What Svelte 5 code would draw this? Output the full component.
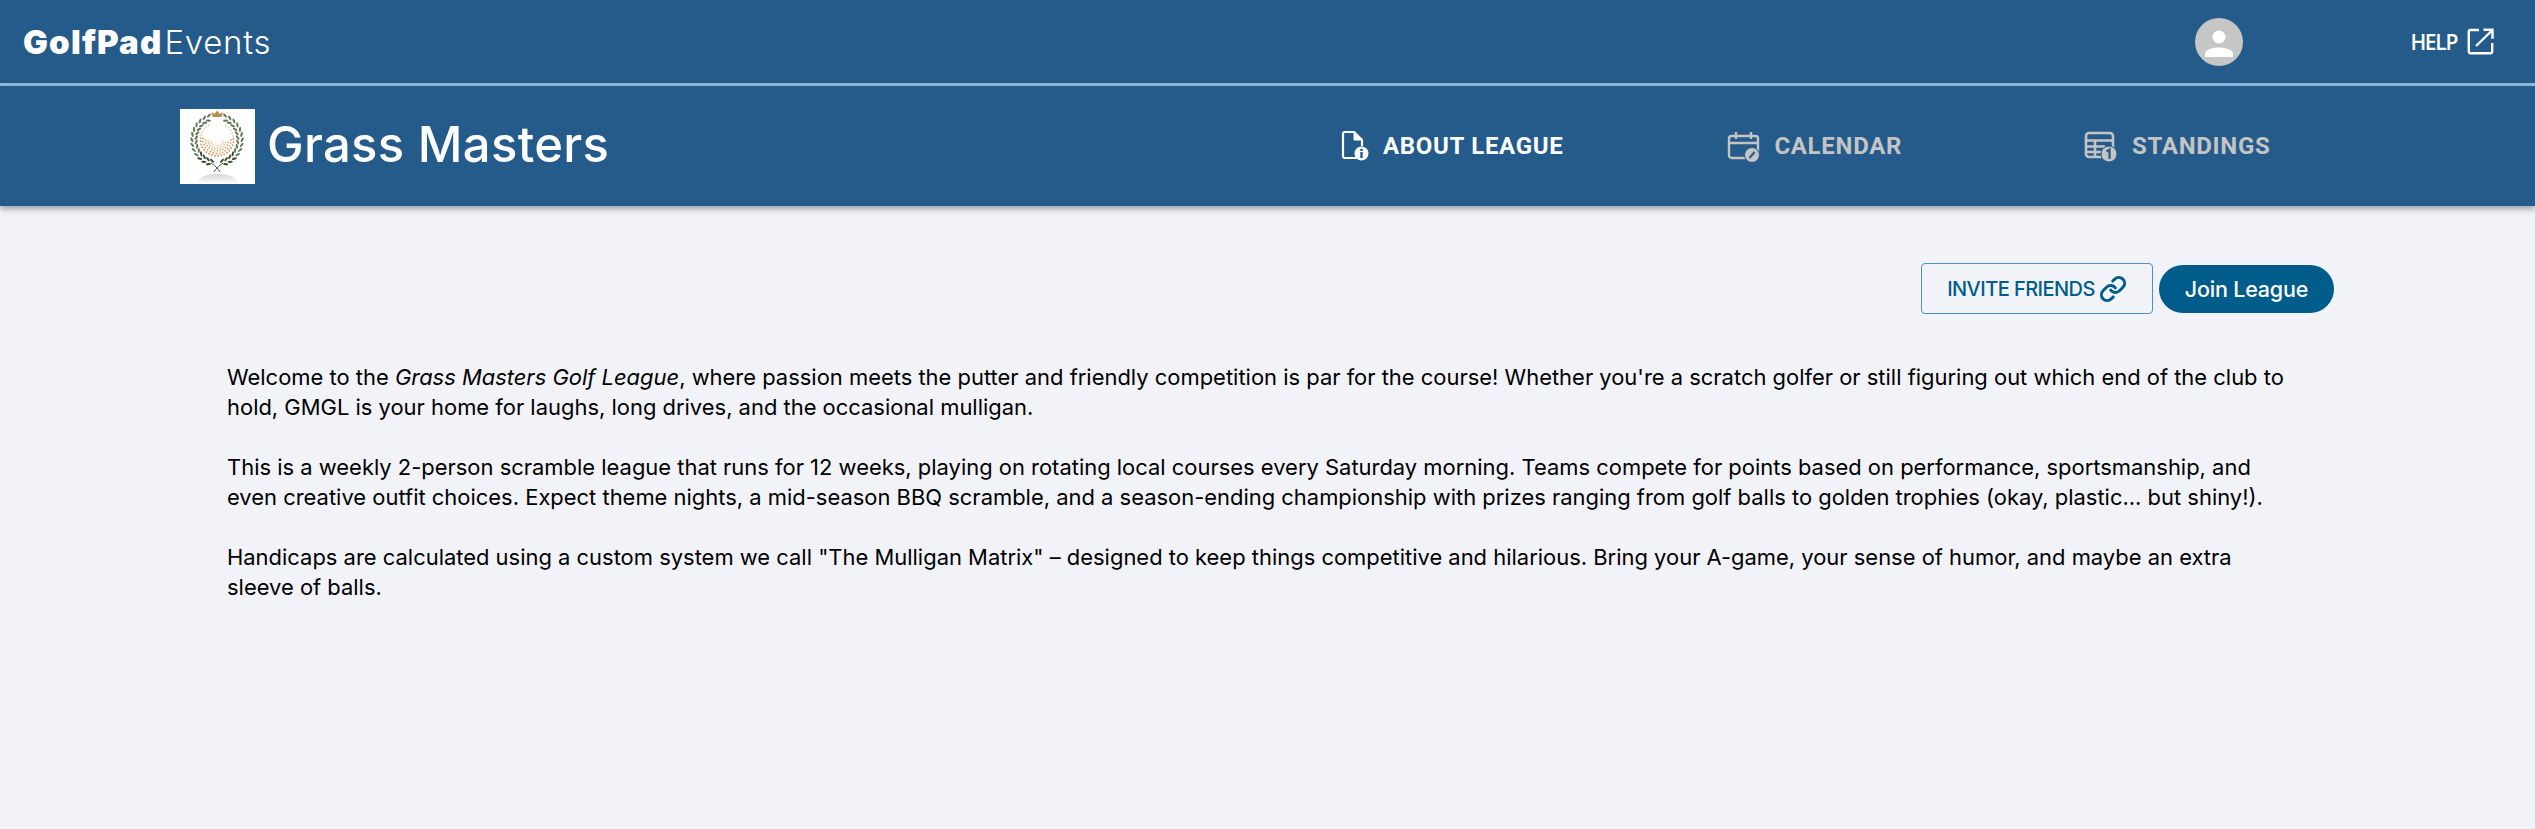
<script>
  const leaves = [];
  for (const side of [-1, 1]) {
    for (let i = 0; i < 26; i++) {
      const deg = 14 + i * 5.9;
      const a = deg * Math.PI / 180;
      const off = i % 2 ? 2.2 : -2.2;
      const x = 37 + side * (23 + off) * Math.sin(a);
      const y = 31 + (23.500 + off) * Math.cos(a);
      const rot = side * (90 - deg + (i % 2 ? 28 : -28));
      leaves.push({ x: x.toFixed(1), y: y.toFixed(1), rot: rot.toFixed(0), f: i < 7 ? '#3f5136' : '#63785a' });
    }
  }
  const dots = [];
  for (let r = 0; r < 5; r++) {
    const rad = 16.500 - r * 2.500;
    const start = r === 0 ? 150 : 100 - r * 6;
    for (let deg = -start; deg <= start; deg += 11 + r * 2) {
      const a = deg * Math.PI / 180;
      const high = Math.abs(deg) > 100;
      dots.push({ x: (37 + rad * Math.sin(a)).toFixed(1), y: (30.500 + rad * Math.cos(a)).toFixed(1), o: high ? 0.45 : (0.95 - r * 0.15).toFixed(2) });
    }
  }
</script>

<div class="page">
  <header class="top">
    <div class="brand"><b>GolfPad</b><span>Events</span></div>
    <div class="top-right">
      <div class="avatar">
        <svg viewBox="0 0 48 48" width="48" height="48"><circle cx="24" cy="19" r="6.500" fill="#fff"/><path d="M10 39v-3c0-4 7-6.500 14-6.500S38 32 38 36v3z" fill="#fff"/></svg>
      </div>
      <div class="help">
        <span>HELP</span>
        <svg viewBox="0 0 27 27" width="27" height="27" fill="none" stroke="#fff" stroke-width="2.400"><path d="M12 2H3a1.500 1.500 0 0 0-1.200 1.200v20.600A1.500 1.500 0 0 0 3 25.200h21a1.500 1.500 0 0 0 1.200-1.400V15"/><path d="M9 18 25 2.500M16.500 1.800h9v9"/></svg>
      </div>
    </div>
  </header>

  <section class="league">
    <div class="identity">
      <svg class="logo" viewBox="0 0 75 75" width="75" height="75">
        <defs>
          <linearGradient id="refl" x1="0" y1="0" x2="0" y2="1"><stop offset="0" stop-color="#d6d6d6"/><stop offset="1" stop-color="#fff"/></linearGradient>
        </defs>
        <rect width="75" height="75" fill="#fff"/>
        <path d="M32.500 8 31.500 3l3 2 2.600-3.500L39.700 5l3-2-1 5z" fill="#bd8a4e"/>
        {#each leaves as l}
          <ellipse cx={l.x} cy={l.y} rx="1.100" ry="2.600" fill={l.f} transform="rotate({l.rot} {l.x} {l.y})"/>
        {/each}
        <path d="M31 54c3 2 7 5 9 9M43 54c-3 2-7 5-9 9" fill="none" stroke="#4f5a48" stroke-width="1"/>
        {#each dots as d}
          <circle cx={d.x} cy={d.y} r="0.900" fill="#c8873f" opacity={d.o}/>
        {/each}
        <path d="M16 75c4-9 13-10 21-10s18 1 22 10z" fill="url(#refl)"/>
      </svg>
      <h1>Grass Masters</h1>
    </div>
    <nav>
      <div class="tab active">
        <svg viewBox="0 0 28 30" width="28" height="30" fill="none" stroke="currentColor" stroke-width="2.200">
          <path d="M16 27H4a2 2 0 0 1-2-2V3a2 2 0 0 1 2-2h9l8 8v6"/>
          <path d="M13 1.500v7.500h8z" fill="currentColor" stroke-width="1"/>
          <circle cx="20.500" cy="22.500" r="7" fill="currentColor" stroke="none"/>
          <rect x="19.300" y="21" width="2.400" height="6" fill="#245b8a" stroke="none"/>
          <rect x="19.300" y="17.800" width="2.400" height="2.200" fill="#245b8a" stroke="none"/>
        </svg>
        <span>ABOUT LEAGUE</span>
      </div>
      <div class="tab">
        <svg viewBox="0 0 33 31" width="33" height="31" fill="none" stroke="currentColor" stroke-width="2.400">
          <rect x="2" y="5" width="29" height="22" rx="2.500" />
          <path d="M2 12h29M9 1v7M24 1v7"/>
          <circle cx="25" cy="24" r="7.500" fill="currentColor" stroke="#245b8a" stroke-width="1"/>
          <path d="M22.500 27l5-6" stroke="#245b8a" stroke-width="2"/>
        </svg>
        <span>CALENDAR</span>
      </div>
      <div class="tab">
        <svg viewBox="0 0 34 31" width="34" height="31" fill="none" stroke="currentColor" stroke-width="2.600">
          <rect x="2" y="2" width="27" height="24" rx="3"/>
          <path d="M2 9.500h27M2 15.500h19M2 21h18M11 9v17"/>
          <circle cx="25" cy="23" r="8" fill="currentColor" stroke="#245b8a" stroke-width="1"/>
          <path d="M22.500 20.500l3-1.800V28" stroke="#245b8a" stroke-width="2.200"/>
        </svg>
        <span>STANDINGS</span>
      </div>
    </nav>
  </section>

  <main>
    <div class="actions">
      <button class="invite">
        <span>INVITE FRIENDS</span>
        <svg viewBox="0 0 24 24" width="28" height="28" fill="none" stroke="#005c8a" stroke-width="2.600" stroke-linecap="round"><path d="M10 13a5 5 0 0 0 7.540.540l3-3a5 5 0 0 0-7.070-7.070l-1.720 1.710"/><path d="M14 11a5 5 0 0 0-7.540-.540l-3 3a5 5 0 0 0 7.070 7.070l1.710-1.710"/></svg>
      </button>
      <button class="join">Join League</button>
    </div>
    <article>
      <p>Welcome to the <em>Grass Masters Golf League</em>, where passion meets the putter and friendly competition is par for the course! Whether you're a scratch golfer or still figuring out which end of the club to<br>hold, GMGL is your home for laughs, long drives, and the occasional mulligan.</p>
      <p>This is a weekly 2-person scramble league that runs for 12 weeks, playing on rotating local courses every Saturday morning. Teams compete for points based on performance, sportsmanship, and<br>even creative outfit choices. Expect theme nights, a mid-season BBQ scramble, and a season-ending championship with prizes ranging from golf balls to golden trophies (okay, plastic... but shiny!).</p>
      <p>Handicaps are calculated using a custom system we call "The Mulligan Matrix" – designed to keep things competitive and hilarious. Bring your A-game, your sense of humor, and maybe an extra<br>sleeve of balls.</p>
    </article>
  </main>
</div>

<style>
  :global(body) { margin: 0; background: #f1f3f8; }
  .page { font-family: Inter, "Liberation Sans", sans-serif; min-height: 829px; background: #f1f3f8; color: #000; }
  .top { height: 83px; border-bottom: 3px solid #8fbce0; background: #245b8a; display: flex; align-items: center; justify-content: space-between; padding: 0 41px 0 23px; color: #fff; }
  .brand { font-size: 33px; display: flex; }
  .brand b { font-weight: 900; letter-spacing: 1.2px; }
  .brand span { font-weight: 300; margin-left: 2px; letter-spacing: 0.7px; }
  .top-right { display: flex; align-items: center; gap: 167px; }
  .avatar { width: 48px; height: 48px; border-radius: 50%; background: #c6c6c6; }
  .avatar svg, .help svg, .tab svg, .logo { display: block; flex: none; }
  .help { display: flex; align-items: center; gap: 10px; font-family: "Open Sans", sans-serif; font-size: 21px; font-weight: 600; letter-spacing: -1.3px; }
  .league { height: 120px; background: #245b8a; display: flex; align-items: center; padding-left: 180px; box-shadow: 0 3px 6px rgba(0,0,0,.35); position: relative; color: #fff; }
  .identity { display: flex; align-items: center; gap: 12px; width: 1091px; }
  h1 { margin: 0; padding-bottom: 4px; font-size: 49px; font-weight: 500; letter-spacing: 0.3px; }
  nav { display: grid; grid-template-columns: repeat(3, 362.5px); font-family: Roboto, sans-serif; }
  .tab { display: flex; align-items: center; justify-content: center; gap: 14px; font-size: 24px; font-weight: 700; letter-spacing: 0.7px; color: #c4c4c4; }
  .tab.active { color: #fff; }
  main { padding: 57px 0 0 227px; }
  .actions { display: flex; justify-content: flex-end; align-items: center; gap: 6px; padding-right: 201px; }
  button { font-family: inherit; display: flex; align-items: center; justify-content: center; }
  .invite { width: 232px; height: 51px; border: 1px solid #4a90c0; border-radius: 4px; background: transparent; color: #005c8a; font-size: 20px; font-weight: 500; gap: 4px; padding: 0; letter-spacing: -0.55px; }
  .join { width: 175px; height: 48px; border: 0; border-radius: 24px; background: #005c8a; color: #fff; font-size: 21.5px; font-weight: 500; padding: 0; letter-spacing: -0.2px; }
  article { width: 2100px; margin-top: 48px; font-size: 21.95px; line-height: 30px; }
  p { margin: 0 0 30px; }
</style>
